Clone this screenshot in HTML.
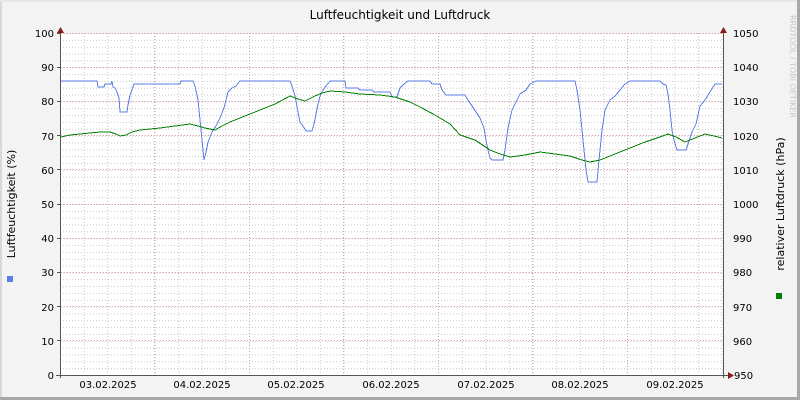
<!DOCTYPE html>
<html><head><meta charset="utf-8"><style>
html,body{margin:0;padding:0;background:#f3f3f3}
svg{display:block}
text{font-family:"DejaVu Sans","Liberation Sans",sans-serif;font-size:10px;fill:#000}
</style></head><body>
<svg width="800" height="400" xmlns="http://www.w3.org/2000/svg">
<defs>
<pattern id="hm" patternUnits="userSpaceOnUse" x="0" y="375" width="800" height="6.84">
<line x1="0" y1="0.5" x2="800" y2="0.5" stroke="#c8c8c8" stroke-width="1" stroke-dasharray="1,2"/>
</pattern>
<pattern id="vm" patternUnits="userSpaceOnUse" x="154.5" y="0" width="23.63" height="400">
<line x1="0.5" y1="0" x2="0.5" y2="400" stroke="#c8c8c8" stroke-width="1" stroke-dasharray="1,2"/>
</pattern>
</defs>
<rect x="0" y="0" width="800" height="400" fill="#f3f3f3"/>
<rect x="0" y="0" width="2" height="400" fill="#d8d8d8"/>
<rect x="0" y="0" width="800" height="2" fill="#e6e6e6"/>
<rect x="797" y="0" width="3" height="400" fill="#a8a8a8"/>
<rect x="0" y="397" width="800" height="3" fill="#a8a8a8"/>
<rect x="61" y="33" width="662" height="342" fill="#ffffff"/>
<rect x="61" y="33" width="662" height="342" fill="url(#hm)"/>
<rect x="61" y="33" width="662" height="342" fill="url(#vm)"/>
<g stroke="#e0a0a0" stroke-width="1" stroke-dasharray="1,2">
<line x1="61" y1="340.5" x2="723" y2="340.5"/><line x1="61" y1="306.5" x2="723" y2="306.5"/>
<line x1="61" y1="272.5" x2="723" y2="272.5"/><line x1="61" y1="238.5" x2="723" y2="238.5"/>
<line x1="61" y1="204.5" x2="723" y2="204.5"/><line x1="61" y1="169.5" x2="723" y2="169.5"/>
<line x1="61" y1="135.5" x2="723" y2="135.5"/><line x1="61" y1="101.5" x2="723" y2="101.5"/>
<line x1="61" y1="67.5" x2="723" y2="67.5"/><line x1="61" y1="33.5" x2="723" y2="33.5"/>
<line x1="154.5" y1="33" x2="154.5" y2="375"/><line x1="249.5" y1="33" x2="249.5" y2="375"/>
<line x1="343.5" y1="33" x2="343.5" y2="375"/><line x1="438.5" y1="33" x2="438.5" y2="375"/>
<line x1="532.5" y1="33" x2="532.5" y2="375"/><line x1="627.5" y1="33" x2="627.5" y2="375"/>
</g>
<polyline shape-rendering="crispEdges" fill="none" stroke="#5b7fe6" stroke-width="1" points="61,81 97,81 98,87 104,87 105,84 111,84 112,81 113,87 115,88 117,92 119,98 120,112 127,112 128,105 130,95 132,90 134,84 180,84 181,81 193,81 195,86 198,100 200,120 202,140 204,160 206,152 208,142 212,132 216,126 220,118 224,108 226,100 228,92 232,88 236,86 240,81 290,81 292,86 295,96 298,112 300,122 303,126 306,131 312,131 314,124 318,104 320,96 323,90 326,86 330,81 345,81 346,88 358,88 360,90 372,90 374,92 390,92 392,97 397,97 400,88 404,84 408,81 430,81 432,84 440,84 442,90 446,95 465,95 468,100 472,106 476,112 480,118 484,128 486,140 488,150 490,158 492,160 503,160 505,150 508,128 512,110 516,102 520,94 526,90 530,84 536,81 575,81 577,90 580,110 583,140 586,170 588,182 597,182 599,160 602,130 605,110 610,100 615,96 620,90 625,84 630,81 660,81 663,84 666,85 668,94 670,110 672,130 674,140 677,150 686,150 688,144 692,132 696,124 700,106 705,100 710,92 715,84 722,84"/>
<polyline shape-rendering="crispEdges" fill="none" stroke="#008000" stroke-width="1" points="61,137 70,135 80,134 90,133 100,132 110,132 116,134 120,136 126,135 132,132 140,130 160,128 175,126 190,124 198,126 205,128 215,130 222,126 230,122 245,116 260,110 275,104 290,96 298,99 305,101 315,96 322,93 330,91 345,92 360,94 380,95 395,97 410,102 420,107 435,115 450,124 460,135 475,140 490,150 500,154 510,157 525,155 540,152 555,154 570,156 582,160 590,162 600,160 610,156 620,152 630,148 645,142 660,137 668,134 676,137 685,142 695,138 705,134 714,136 722,138"/>
<g stroke="#555" stroke-width="1">
<line x1="60.5" y1="33" x2="60.5" y2="378"/>
<line x1="723.5" y1="33" x2="723.5" y2="378"/>
<line x1="56" y1="375.5" x2="728" y2="375.5"/>
</g>
<g stroke="#555" stroke-width="1">
<line x1="57" y1="340.5" x2="61" y2="340.5"/><line x1="57" y1="306.5" x2="61" y2="306.5"/><line x1="57" y1="272.5" x2="61" y2="272.5"/><line x1="57" y1="238.5" x2="61" y2="238.5"/><line x1="57" y1="204.5" x2="61" y2="204.5"/><line x1="57" y1="169.5" x2="61" y2="169.5"/><line x1="57" y1="135.5" x2="61" y2="135.5"/><line x1="57" y1="101.5" x2="61" y2="101.5"/><line x1="57" y1="67.5" x2="61" y2="67.5"/><line x1="57" y1="33.5" x2="61" y2="33.5"/>
</g>
<polygon points="57,33 64,33 60.5,27" fill="#8b1a1a"/>
<polygon points="720,33 727,33 723.5,27" fill="#8b1a1a"/>
<polygon points="728,372 728,379 734,375.5" fill="#8b1a1a"/>
<g text-anchor="end">
<text x="54" y="379">0</text><text x="54" y="345">10</text><text x="54" y="311">20</text><text x="54" y="276">30</text><text x="54" y="242">40</text><text x="54" y="208">50</text><text x="54" y="174">60</text><text x="54" y="140">70</text><text x="54" y="105">80</text><text x="54" y="71">90</text><text x="54" y="37">100</text>
</g>
<g>
<text x="734" y="379">950</text><text x="733" y="345">960</text><text x="733" y="311">970</text><text x="733" y="276">980</text><text x="733" y="242">990</text><text x="733" y="208">1000</text><text x="733" y="174">1010</text><text x="733" y="140">1020</text><text x="733" y="105">1030</text><text x="733" y="71">1040</text><text x="733" y="37">1050</text>
</g>
<g text-anchor="middle">
<text x="108" y="388">03.02.2025</text><text x="202" y="388">04.02.2025</text><text x="296" y="388">05.02.2025</text><text x="391" y="388">06.02.2025</text><text x="486" y="388">07.02.2025</text><text x="580" y="388">08.02.2025</text><text x="675" y="388">09.02.2025</text>
</g>
<text x="400" y="19" text-anchor="middle" style="font-size:12px">Luftfeuchtigkeit und Luftdruck</text>
<text transform="translate(15,204) rotate(-90)" text-anchor="middle" style="font-size:11px">Luftfeuchtigkeit (%)</text>
<text transform="translate(784,204) rotate(-90)" text-anchor="middle" style="font-size:11px">relativer Luftdruck (hPa)</text>
<text transform="translate(790,15) rotate(90)" style="font-size:8px;fill:#c8c8c8">RRDTOOL / TOBI OETIKER</text>
<rect x="7" y="276" width="6" height="6" fill="#5b7fe6"/>
<rect x="776" y="293" width="6" height="6" fill="#008000"/>
</svg>
</body></html>
